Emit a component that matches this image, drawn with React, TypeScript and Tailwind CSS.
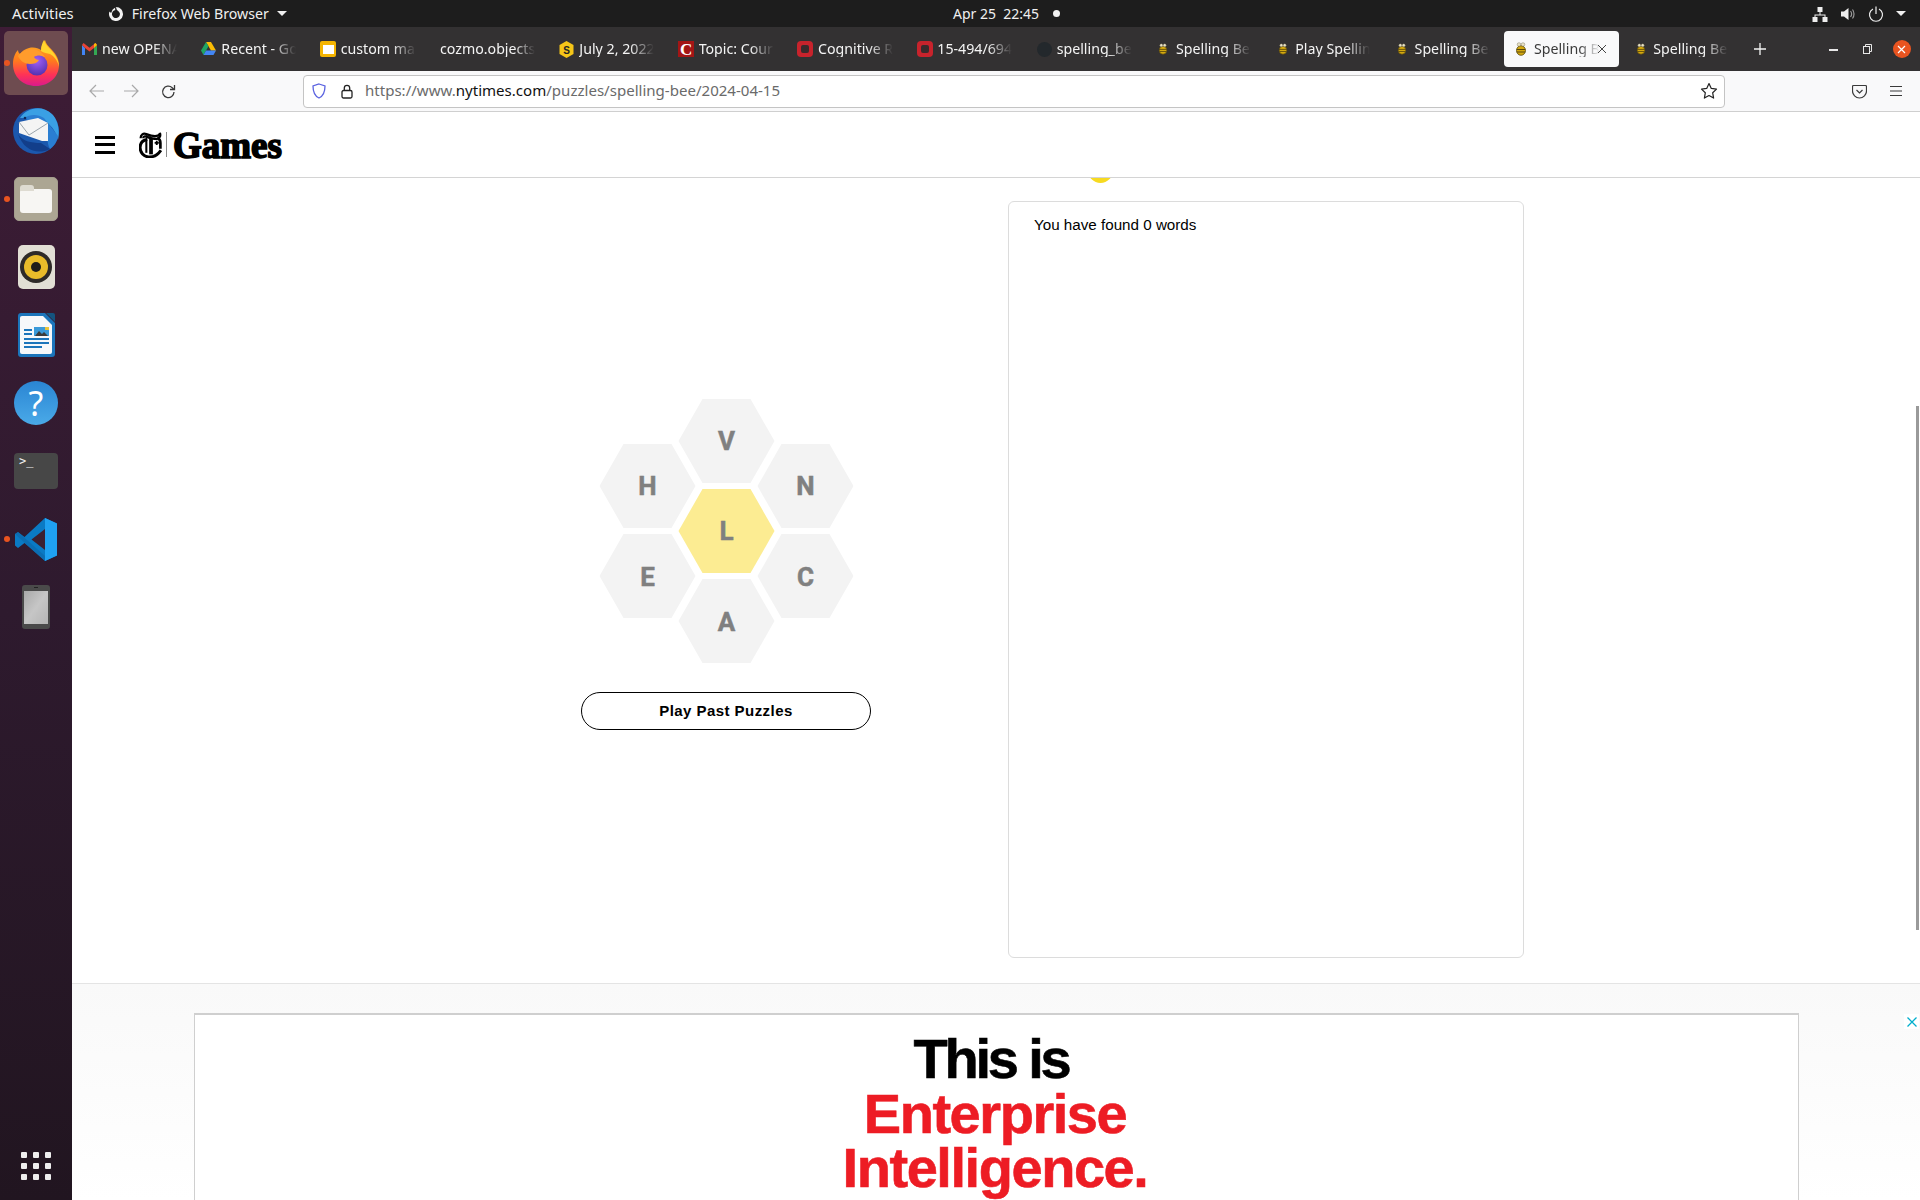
import React from "react";

const ui = "font-['Noto_Sans','Open_Sans',sans-serif]";

function Bee({ big = false }: { big?: boolean }) {
  return (
    <svg width={big ? 12 : 10} height={big ? 14 : 12} viewBox="0 0 12 14">
      <ellipse cx="6" cy="8.500" rx="4.500" ry="4.800" fill="#d4a80f" stroke="#57470c" strokeWidth="0.800" />
      <path d="M1.800 7.500h8.400M1.800 10h8.400" stroke="#57470c" strokeWidth="1" />
      <circle cx="4" cy="2.500" r="1.800" fill="#e8e2c8" stroke="#6a6248" strokeWidth="0.400" />
      <circle cx="8" cy="2.500" r="1.800" fill="#e8e2c8" stroke="#6a6248" strokeWidth="0.400" />
    </svg>
  );
}

function Favicon({ kind }: { kind: string }) {
  if (kind === "gmail")
    return (
      <svg width="15" height="12" viewBox="0 0 15 12">
        <path d="M0 2v10h3V5z" fill="#4285f4" />
        <path d="M15 2v10h-3V5z" fill="#34a853" />
        <path d="M0 2l3 3 4.500 3.400L12 5l3-3-1.500-2L7.500 4.800 1.500 0z" fill="#ea4335" />
        <path d="M12 5l3-3-1.500-2-1.500 1.100z" fill="#fbbc04" />
      </svg>
    );
  if (kind === "drive")
    return (
      <svg width="15" height="14" viewBox="0 0 15 14">
        <path d="M5 0h5l5 8.500h-5z" fill="#fbbc04" />
        <path d="M5 0l2.500 4.300L2.500 13 0 8.500z" fill="#1fa463" />
        <path d="M5 8.500h10L12.500 13h-10z" fill="#4285f4" />
      </svg>
    );
  if (kind === "slides")
    return (
      <div className="flex h-[16px] w-[16px] items-center justify-center rounded-[2px] bg-[#f4b400]">
        <div className="h-[9px] w-[11px] bg-white" />
      </div>
    );
  if (kind === "hex")
    return (
      <svg width="15" height="17" viewBox="0 0 15 17">
        <path d="M7.500 0L14.500 4v9l-7 4-7-4V4z" fill="#f5c518" />
        <text x="7.500" y="12.500" textAnchor="middle" fontSize="10" fontWeight="700" fill="#222" fontFamily="'Liberation Sans',sans-serif">S</text>
      </svg>
    );
  if (kind === "c")
    return (
      <div className="flex h-[16px] w-[16px] items-center justify-center bg-[#a31515] font-['Liberation_Serif',serif] text-[17px] leading-none font-bold text-white">
        C
      </div>
    );
  if (kind === "red")
    return (
      <div className="flex h-[16px] w-[16px] items-center justify-center rounded-[4px] bg-[#c8232c]">
        <div className="h-[8px] w-[8px] rounded-[2px] bg-[#3a2a2c]" />
      </div>
    );
  if (kind === "gh") return <div className="h-[15px] w-[15px] rounded-full bg-[#23282c]" />;
  if (kind === "bee") return <Bee />;
  return null;
}

const tabs = [
  ["gmail", "new OPENAI account"],
  ["drive", "Recent - Google Drive"],
  ["slides", "custom marker"],
  ["none", "cozmo.objects.custom"],
  ["hex", "July 2, 2022 Solutions"],
  ["c", "Topic: Course Forum"],
  ["red", "Cognitive Robotics"],
  ["red", "15-494/694 Cognitive"],
  ["gh", "spelling_bee_solver"],
  ["bee", "Spelling Bee Forum"],
  ["bee", "Play Spelling Bee"],
  ["bee", "Spelling Bee Forum"],
  ["active", "Spelling Bee Forum"],
  ["bee", "Spelling Bee Forum"],
];

function Tab({ kind, title }: { kind: string; title: string }) {
  const active = kind === "active";
  const bare = kind === "none";
  return (
    <div
      className={`relative flex h-[36px] w-[115.33px] shrink-0 items-center rounded-[4px] ${
        active ? "bg-[#f9f9fa] text-[#3a3a3a]" : "text-[#f4f4f4]"
      }`}
    >
      <div className={`flex shrink-0 items-center justify-center ${bare ? "w-[10px]" : "w-[30px] pl-[5px]"}`}>
        {active ? <Bee big /> : <Favicon kind={kind} />}
      </div>
      <div
        className={`overflow-hidden pt-[1px] text-[14.200px] leading-none whitespace-nowrap ${
          active
            ? "w-[66px] [mask-image:linear-gradient(to_right,black_68%,transparent_100%)]"
            : bare
              ? "w-[95px] [mask-image:linear-gradient(to_right,black_78%,transparent_100%)]"
              : "w-[75px] [mask-image:linear-gradient(to_right,black_68%,transparent_100%)]"
        }`}
      >
        {title}
      </div>
      {active && (
        <svg className="absolute top-[13px] right-[12px]" width="10" height="10" viewBox="0 0 10 10">
          <path d="M1 1l8 8M9 1l-8 8" stroke="#444" strokeWidth="1" />
        </svg>
      )}
    </div>
  );
}

function TopBar() {
  return (
    <div className={`flex h-[27px] shrink-0 items-center bg-[#1d1d1d] text-[14px] text-[#f0f0f0] ${ui}`}>
      <div className="flex w-[953px] shrink-0 items-center">
        <span className="ml-[12px] text-[14.800px]">Activities</span>
        <svg className="ml-[34px]" width="16" height="16" viewBox="0 0 16 16">
          <path
            d="M8 1a7 7 0 1 1-6.500 4.400C2 6.500 3 6.800 3.600 6.500 3.700 4.500 5.200 2.400 7.500 1.500 6.800 2.600 7 3.400 7.500 4a4 4 0 1 0 4.400 3.400C11.600 6 10 4.800 9 4 8.300 3 8.400 1.800 8 1z"
            fill="#f2f2f2"
          />
        </svg>
        <span className="ml-[8px] text-[14.200px]">Firefox Web Browser</span>
        <div className="ml-[8px] h-0 w-0 border-x-[5px] border-t-[5px] border-x-transparent border-t-[#f0f0f0]" />
      </div>
      <span className="whitespace-pre">Apr 25&nbsp;&nbsp;22:45</span>
      <div className="ml-[14px] h-[7px] w-[7px] rounded-full bg-[#f2f2f2]" />
      <div className="ml-auto mr-[14px] flex items-center gap-[12px]">
        <svg width="16" height="16" viewBox="0 0 16 16" fill="#eee">
          <rect x="5.500" y="1" width="5" height="5" />
          <rect x="0.500" y="11" width="5" height="5" />
          <rect x="10.500" y="11" width="5" height="5" />
          <path d="M7.500 6h1v2.500H13.500V11h-1V9.500h-9V11h-1V8.500h5z" />
        </svg>
        <svg width="16" height="16" viewBox="0 0 16 16" fill="none">
          <path d="M1 5.500h3L8.500 2v12L4 10.500H1z" fill="#eee" />
          <path d="M10.500 5c1.200 1.600 1.200 4.400 0 6M12.500 3.500c2 2.500 2 6.500 0 9" stroke="#999" strokeWidth="1.200" />
        </svg>
        <svg width="16" height="16" viewBox="0 0 16 16" fill="none" stroke="#eee" strokeWidth="1.200">
          <path d="M5 3a6.500 6.500 0 1 0 6 0M8 .5V8" />
        </svg>
        <div className="h-0 w-0 border-x-[5px] border-t-[5px] border-x-transparent border-t-[#f0f0f0]" />
      </div>
    </div>
  );
}

function TabBar() {
  return (
    <div className={`flex h-[44px] shrink-0 items-center bg-[#333132] ${ui}`}>
      <div className="flex gap-[4px]">
        {tabs.map(([k, t], i) => (
          <Tab key={i} kind={k} title={t} />
        ))}
      </div>
      <svg className="ml-[14px]" width="14" height="14" viewBox="0 0 14 14">
        <path d="M7 1v12M1 7h12" stroke="#f4f4f4" strokeWidth="1.300" />
      </svg>
      <div className="ml-[62px] h-[1.500px] w-[9px] translate-y-[1px] bg-[#e8e8e8]" />
      <svg className="ml-[24px]" width="10" height="10" viewBox="0 0 10 10" fill="none" stroke="#e8e8e8">
        <rect x="1.500" y="2.500" width="6" height="7" />
        <path d="M3.500 2.500v-2h6v7h-2" />
      </svg>
      <div className="ml-[21px] flex h-[18px] w-[18px] items-center justify-center rounded-full bg-[#e95420]">
        <svg width="9" height="9" viewBox="0 0 9 9">
          <path d="M1 1l7 7M8 1l-7 7" stroke="#fff" strokeWidth="1.200" />
        </svg>
      </div>
    </div>
  );
}

function NavBar() {
  return (
    <div className={`flex h-[41px] shrink-0 items-center border-b border-[#cfcfcf] bg-[#f9f9fa] ${ui}`}>
      <svg className="ml-[17px]" width="15" height="14" viewBox="0 0 15 14" fill="none" stroke="#a9a9a9" strokeWidth="1.200">
        <path d="M1 7h14M7 1L1 7l6 6" />
      </svg>
      <svg className="ml-[20px]" width="15" height="14" viewBox="0 0 15 14" fill="none" stroke="#a9a9a9" strokeWidth="1.200">
        <path d="M0 7h14M8 1l6 6-6 6" />
      </svg>
      <svg className="ml-[22px]" width="15" height="15" viewBox="0 0 15 15" fill="none" stroke="#3a3a3a" strokeWidth="1.300">
        <path d="M13 8a5.700 5.700 0 1 1-1.800-4.300L13 5.500" />
        <path d="M13.500 1v4.500H9" />
      </svg>
      <div className="ml-[127px] flex h-[33px] w-[1422px] shrink-0 items-center rounded-[4px] border border-[#c4c4c4] bg-white">
        <svg className="ml-[8px]" width="14" height="16" viewBox="0 0 14 16" fill="none" stroke="#5a62e0" strokeWidth="1.300">
          <path d="M7 1l6 2c0 6-1.500 10-6 12C2.500 13 1 9 1 3z" />
        </svg>
        <svg className="ml-[15px]" width="12" height="15" viewBox="0 0 12 15" fill="none" stroke="#222" strokeWidth="1.300">
          <rect x="1" y="6.500" width="10" height="7.500" rx="1.500" />
          <path d="M3.300 6.500V4a2.700 2.700 0 0 1 5.400 0v2.500" />
        </svg>
        <span className="ml-[12px] text-[15.050px] leading-none whitespace-nowrap text-[#6a6a6a]">
          https://www.<span className="text-[#111]">nytimes.com</span>/puzzles/spelling-bee/2024-04-15
        </span>
        <svg className="mr-[6px] ml-auto" width="18" height="18" viewBox="0 0 18 18" fill="none" stroke="#222" strokeWidth="1.200">
          <path d="M9 1.500l2.300 4.900 5.200.7-3.800 3.700.9 5.300L9 13.500l-4.600 2.600.9-5.300L1.500 7.100l5.200-.7z" strokeLinejoin="round" />
        </svg>
      </div>
      <svg className="ml-[127px]" width="15" height="15" viewBox="0 0 15 15" fill="none" stroke="#3a3a3a" strokeWidth="1.200">
        <path d="M1.500 1.500h12a1 1 0 0 1 1 1V7a7 7 0 0 1-14 0V2.500a1 1 0 0 1 1-1z" />
        <path d="M4.500 6l3 3 3-3" />
      </svg>
      <svg className="ml-[22px]" width="14" height="12" viewBox="0 0 14 12" stroke="#3a3a3a" strokeWidth="1.200">
        <path d="M1 1.500h12M1 6h12M1 10.500h12" />
      </svg>
    </div>
  );
}

function SiteHeader() {
  return (
    <div className="z-10 flex h-[66px] shrink-0 items-center border-b border-[#d4d4d4] bg-white">
      <div className="ml-[23px] flex h-[18px] w-[20px] flex-col justify-between">
        <div className="h-[3px] bg-black" />
        <div className="h-[3px] bg-black" />
        <div className="h-[3px] bg-black" />
      </div>
      <svg className="ml-[24px]" width="23" height="26" viewBox="0 0 22 25" fill="none" stroke="#000">
        <path d="M1.500 6C1.500 2.500 4 .8 7 2c4 1.500 8 2.500 11 1.500 1.500-.5 2-1.500 2-2.500 1 2.500 0 5-3 5.500-3 .4-7-1-10-2C5.500 4 4 4 4 6" strokeWidth="2.200" />
        <path d="M11.500 5.500V21.500" strokeWidth="3.600" />
        <path d="M8 7C3 8 1 11.500 1 15c0 5 3.500 8.500 8 9 4.500.3 9-2 12-6.500" strokeWidth="2.800" />
        <path d="M7 8v12" strokeWidth="2" />
        <path d="M15 10.500h4M17 8.500v4" strokeWidth="1.800" />
        <path d="M17.500 5.500c2 1 3 2.500 3 5v5.500" strokeWidth="2.600" />
      </svg>
      <div className="ml-[4px] h-[25px] w-px bg-[#8a8a8a]" />
      <span className="ml-[6px] translate-y-[1px] font-['Liberation_Serif',serif] text-[37px] leading-none font-bold text-black [-webkit-text-stroke:1.600px_black]">
        Games
      </span>
    </div>
  );
}

const hexPts = "24,0 72,0 96,42 72,84 24,84 0,42";

function Cell({ x, y, ch, center = false, dy = 0 }: { x: number; y: number; ch: string; center?: boolean; dy?: number }) {
  return (
    <g transform={`translate(${x} ${y})`}>
      <polygon points={hexPts} fill={center ? "#fcec92" : "#f3f3f3"} />
      <text
        x="48"
        y={51.5 + dy}
        textAnchor="middle"
        fontSize="26"
        fontWeight="700"
        fill="#808080"
        stroke="#808080"
        strokeWidth="0.500"
        fontFamily="'Roboto','Liberation Sans',sans-serif"
      >
        {ch}
      </text>
    </g>
  );
}

function Hive() {
  return (
    <svg className="translate-x-[0.500px]" width="254" height="264" viewBox="0 0 254 264">
      <Cell x={79} y={0} ch="V" dy={-1} />
      <Cell x={0} y={45} ch="H" dy={-1} />
      <Cell x={158} y={45} ch="N" dy={-1} />
      <Cell x={79} y={90} ch="L" center dy={-1} />
      <Cell x={0} y={135} ch="E" />
      <Cell x={158} y={135} ch="C" />
      <Cell x={79} y={180} ch="A" />
    </svg>
  );
}

function Main() {
  return (
    <div className="relative flex h-[806px] shrink-0 overflow-hidden border-b border-[#e4e4e4] bg-white font-['Liberation_Sans',Arial,sans-serif]">
      <div className="absolute top-[-20px] left-[1016px] h-[25px] w-[25px] rounded-full bg-[#f7da21]" />
      <div className="ml-[372px] flex w-[564px] shrink-0 flex-col items-center pt-[221px]">
        <Hive />
        <button className="mt-[29px] flex h-[38px] w-[290px] items-center justify-center rounded-full border-[1.500px] border-black bg-white text-[15px] font-bold tracking-[0.450px] text-black">
          Play Past Puzzles
        </button>
      </div>
      <div className="mt-[23px] h-[757px] w-[516px] shrink-0 rounded-[6px] border border-[#dcdcdc] pt-[14px] pl-[25px] text-[15.200px] leading-[18px] text-black">
        You have found 0 words
      </div>
      <div className="absolute top-[228px] right-[1px] h-[524px] w-[3px] bg-[#9a9a9a]" />
    </div>
  );
}

function Ad() {
  return (
    <div className="relative min-h-0 flex-1 overflow-hidden bg-gradient-to-b from-[#f9f9f9] to-white pt-[29px]">
      <div className="mx-auto h-[300px] w-[1605px] border border-t-2 border-[#cfcfcf] bg-white pt-[17px] pr-[10px] text-center font-['Liberation_Sans',Arial,sans-serif] text-[56px] leading-[54.5px] font-bold tracking-[-1.450px] text-[#ed1c24] [-webkit-text-stroke:0.600px]">
        <div className="tracking-[-3.200px] text-black">This is</div>
        <div className="translate-x-[4px]">Enterprise</div>
        <div className="translate-x-[4px]">Intelligence.</div>
      </div>
      <div className="absolute top-[30px] right-[1px] flex h-[15px] w-[15px] items-center justify-center bg-white">
        <svg width="10" height="10" viewBox="0 0 10 10">
          <path d="M.5.5l9 9M9.500.5l-9 9" stroke="#00aecd" strokeWidth="1.300" />
        </svg>
      </div>
    </div>
  );
}

function DockSlot({ children, dot = false }: { children: React.ReactNode; dot?: boolean }) {
  return (
    <div className="relative flex h-[68px] w-[72px] items-center justify-center">
      {children}
      {dot && <div className="absolute top-[31px] left-[4px] h-[6px] w-[6px] rounded-full bg-[#e95420]" />}
    </div>
  );
}

function Dock() {
  return (
    <div className="flex h-full w-[72px] shrink-0 flex-col bg-gradient-to-b from-[#3e1c36] via-[#2e1a2e] to-[#211520] pt-[2px]">
      <DockSlot dot>
        <div className="absolute top-[2px] left-[4px] h-[64px] w-[64px] rounded-[5px] bg-[#6e4c50]" />
        <svg className="relative" width="46" height="46" viewBox="0 0 46 46">
          <defs>
            <linearGradient id="ffa" x1="0.500" y1="0" x2="0.500" y2="1">
              <stop offset="0" stopColor="#ffb31f" />
              <stop offset="0.450" stopColor="#ff7a1e" />
              <stop offset="0.750" stopColor="#ff3355" />
              <stop offset="1" stopColor="#db1a8c" />
            </linearGradient>
            <radialGradient id="ffg" cx="0.500" cy="0.300" r="0.800">
              <stop offset="0" stopColor="#a060f8" />
              <stop offset="1" stopColor="#4a2aa5" />
            </radialGradient>
          </defs>
          <path d="M32 0c1 4 3 6 7 10 5 5 7 10 7 15 0 12-10 21-23 21S0 37 0 24C0 18 2 13 5 10c0 2 1 3 2 4 2-3 5-5 9-6 5-1 9 0 12 2 0-4 2-7 4-10z" fill="url(#ffa)" />
          <path d="M31 0c1 4 3 6 7 10 5 5 8 11 8 17-1-6-5-11-9-13-3-1-6-1-9-3 0-4 1-8 3-11z" fill="#ffd52e" />
          <circle cx="24" cy="25" r="10.500" fill="url(#ffg)" />
          <path d="M5 16c3-4 8-7 13-7 6 0 11 3 14 8-4-2-8-2-11 0 1 2 3 3 5 3-2 3-5 4-9 4-5 0-10-3-12-8z" fill="#ff9c2c" />
        </svg>
      </DockSlot>
      <DockSlot>
        <svg width="48" height="50" viewBox="0 0 48 50">
          <circle cx="24" cy="25" r="23" fill="#1b58ae" />
          <path d="M8 12C14 2 30-2 40 8c6 6 8 16 6 26-2-8-6-14-12-18-6-3-14-4-26-4z" fill="#3aa0e4" />
          <path d="M12 12c6-4 14-4 20 0l14 18c-1 6-4 10-8 13-3-5-2-12-6-20z" fill="#2a7ed2" />
          <path d="M7 16l19-4 10 5v18l-6 0L7 27z" fill="#f4f4f4" />
          <path d="M7 16l10 13 19-12" fill="none" stroke="#9aa4ac" strokeWidth="1" />
          <path d="M6 28c4 7 13 9 23 9l9 6c-12 6-26 2-32-15z" fill="#123e8a" />
          <circle cx="13" cy="12" r="1.300" fill="#0d2a5c" />
        </svg>
      </DockSlot>
      <DockSlot dot>
        <div className="flex h-[44px] w-[44px] items-center justify-center rounded-[5px] border border-[#a39d8d] bg-[#aca693]">
          <div className="relative mt-[3px] h-[24px] w-[32px] rounded-[3px] bg-[#f7f6f3]">
            <div className="absolute top-[-4px] left-0 h-[6px] w-[14px] rounded-t-[3px] bg-[#dedbd1]" />
          </div>
        </div>
      </DockSlot>
      <DockSlot>
        <div className="flex h-[44px] w-[37px] items-center justify-center rounded-[5px] bg-[#e2dfd5]">
          <div className="flex h-[32px] w-[32px] items-center justify-center rounded-full bg-[#2e2a28]">
            <div className="flex h-[24px] w-[24px] items-center justify-center rounded-full bg-[#e9bb2a]">
              <div className="h-[10px] w-[10px] rounded-full bg-[#1e1c1a]" />
            </div>
          </div>
        </div>
      </DockSlot>
      <DockSlot>
        <svg width="37" height="44" viewBox="0 0 37 44">
          <path d="M3 0h24l10 10v31a3 3 0 0 1-3 3H3a3 3 0 0 1-3-3V3a3 3 0 0 1 3-3z" fill="#1b75bb" />
          <path d="M4 3h21l9 9v27a2 2 0 0 1-2 2H4a2 2 0 0 1-2-2V5a2 2 0 0 1 2-2z" fill="#f6f8fa" />
          <path d="M28 0h7a2 2 0 0 1 2 2v7z" fill="#14547f" />
          <path d="M6 16h8v2H6zM6 20h8v2H6zM6 25h25v2H6zM6 29h25v2H6zM6 33h18v2H6z" fill="#1b75bb" />
          <rect x="16" y="14" width="15" height="9" fill="#3a9ad9" />
          <path d="M17 23l4-5 3 3 2-2 4 4z" fill="#3b3b3b" />
          <rect x="27" y="14" width="4" height="3" fill="#e8c33a" />
        </svg>
      </DockSlot>
      <DockSlot>
        <div className="flex h-[44px] w-[44px] items-center justify-center rounded-full bg-gradient-to-b from-[#2a85d3] to-[#4aaae8] font-['Noto_Sans',sans-serif] text-[34px] leading-none text-white">
          ?
        </div>
      </DockSlot>
      <DockSlot>
        <div className="h-[36px] w-[44px] rounded-[4px] bg-[#474747] pt-[1px] pl-[5px] font-['DejaVu_Sans_Mono',monospace] text-[12px] leading-[14px] text-[#f0f0f0]">
          &gt;_
        </div>
      </DockSlot>
      <DockSlot dot>
        <svg width="42" height="43" viewBox="0 0 42 43">
          <path d="M30 0l12 5.500v32L30 43 9.500 25 3 30l-3-2.500V16l3-2 6.500 5z" fill="#0a7ac4" />
          <path d="M30 0l12 5.500v32L30 43z" fill="#1fa1f1" />
          <path d="M30 11L16.500 21.500 30 32z" fill="#3c2030" />
          <path d="M0 16l3-2 27 24v5L0 16z" fill="#0b65a8" opacity="0.600" />
        </svg>
      </DockSlot>
      <DockSlot>
        <div className="relative flex h-[44px] w-[28px] items-center justify-center rounded-[3px] bg-[#4a4a4a]">
          <div className="h-[33px] w-[24px] bg-gradient-to-br from-[#a9a9a9] via-[#c6c6c6] to-[#b4b4b4]" />
          <div className="absolute top-[2px] h-[1px] w-[4px] bg-[#222]" />
        </div>
      </DockSlot>
      <div className="mt-auto mb-[20px] ml-[21px] grid w-[30px] grid-cols-3 gap-x-[6px] gap-y-[5px]">
        {Array.from({ length: 9 }).map((_, i) => (
          <div key={i} className="h-[6px] w-[6px] rounded-[1px] bg-[#eeeeee]" />
        ))}
      </div>
    </div>
  );
}

export default function App() {
  return (
    <div className="flex h-[1200px] w-[1920px] flex-col overflow-hidden">
      <TopBar />
      <div className="flex min-h-0 flex-1">
        <Dock />
        <div className="flex min-w-0 flex-1 flex-col">
          <TabBar />
          <NavBar />
          <SiteHeader />
          <Main />
          <Ad />
        </div>
      </div>
    </div>
  );
}
